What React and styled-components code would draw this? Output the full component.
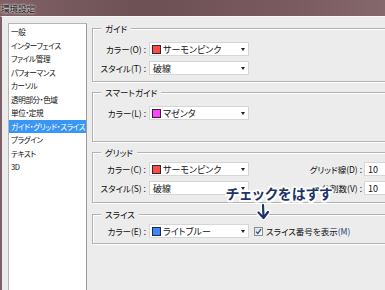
import React from "react";
import styled, { createGlobalStyle } from "styled-components";

const GlobalStyle = createGlobalStyle`
  html, body {
    margin: 0;
    padding: 0;
  }
  body {
    background: #ececec;
    font-family: "Noto Sans CJK JP", "Noto Sans", sans-serif;
    font-feature-settings: "palt";
  }
`;

const Frame = styled.div`
  width: 385px;
  height: 290px;
  overflow: hidden;
`;

const Window = styled.div`
  width: 420px;
  height: 290px;
  display: flex;
  flex-direction: column;
`;

const TitleBar = styled.div`
  height: 16px;
  flex: none;
  display: flex;
  align-items: center;
  padding-left: 1px;
  background: linear-gradient(90deg, #806266 0%, #6d5054 35%, #7a5c60 70%, #8a6d70 100%);
  font-size: 8.5px;
  color: #111;
  text-shadow: 0 0 3px rgba(255, 255, 255, 0.9), 0 0 2px rgba(255, 255, 255, 0.9);
`;

const Body = styled.div`
  position: relative;
  flex: 1;
  min-height: 0;
  overflow: hidden;
  display: flex;
  align-items: flex-start;
  background: #ececec;
  border-left: 2px solid #7d6166;
  border-top: 1px solid #f8f8f8;
  padding-left: 6px;
`;

const List = styled.ul`
  list-style: none;
  margin: 6px 0 0;
  padding: 1px 0 0;
  width: 79px;
  height: 290px;
  box-sizing: border-box;
  overflow: hidden;
  background: #fff;
  border: 1px solid #b5b5b5;
  border-right-color: #9a9a9a;
  font-size: 7.6px;
  letter-spacing: -0.4px;
`;

const ListItem = styled.li`
  height: 13.5px;
  line-height: 13.5px;
  padding-left: 2px;
  white-space: nowrap;
  color: ${(p) => (p.$selected ? "#fff" : "#111")};
  background: ${(p) => (p.$selected ? "#3a96f5" : "transparent")};
`;

const Panel = styled.div`
  flex: 1;
  display: flex;
  flex-direction: column;
  padding: 11px 0 0 5px;
`;

const Group = styled.section`
  position: relative;
  box-sizing: border-box;
  height: ${(p) => p.$h}px;
  margin-top: ${(p) => p.$mt || 0}px;
  padding-top: ${(p) => p.$pt}px;
  border: 1px solid #b3b3b3;
  box-shadow: inset 1px 1px 0 #fff, 1px 1px 0 #fff;
  display: flex;
  flex-direction: column;
  gap: 5px;
`;

const Legend = styled.span`
  position: absolute;
  top: -6px;
  left: 8px;
  padding: 0 4px;
  background: #ececec;
  font-size: 8.5px;
  line-height: 11px;
  color: #111;
`;

const Row = styled.div`
  display: flex;
  align-items: center;
  height: 14px;
  font-size: 8.5px;
  color: #111;
`;

const Label = styled.span`
  width: ${(p) => p.$w || 53}px;
  text-align: right;
  white-space: nowrap;
  flex: none;
`;

const Select = styled.div`
  margin-left: 3px;
  width: 100px;
  height: 14px;
  box-sizing: border-box;
  flex: none;
  display: flex;
  align-items: center;
  padding-left: ${(p) => (p.$plain ? 3 : 2)}px;
  background: #fff;
  border: 1px solid #d6d6d6;
  font-size: 9px;
`;

const Swatch = styled.span`
  width: 9px;
  height: 9px;
  box-sizing: border-box;
  flex: none;
  margin-right: 2px;
  border: 1px solid #2a2a2a;
  background: ${(p) => p.$color};
`;

const Arrow = styled.span`
  margin-left: auto;
  margin-right: 3px;
  width: 0;
  height: 0;
  border-left: 2.5px solid transparent;
  border-right: 2.5px solid transparent;
  border-top: 3px solid #222;
`;

const NumInput = styled.div`
  margin-left: 2px;
  width: 40px;
  height: 14px;
  box-sizing: border-box;
  padding-left: 3px;
  display: flex;
  align-items: center;
  background: #fff;
  border: 1px solid #d6d6d6;
  font-size: 9px;
`;

const Check = styled.span`
  margin-left: 5px;
  width: 9px;
  height: 9px;
  box-sizing: border-box;
  flex: none;
  display: flex;
  align-items: center;
  justify-content: center;
  border: 1px solid #8e8f8f;
  background: linear-gradient(135deg, #dcdcdc, #fafafa);
`;

const CheckLabel = styled.span`
  margin-left: 3px;
  white-space: nowrap;
`;

const Mnemonic = styled.span`
  color: #2b3f7a;
`;

const Note = styled.div`
  position: absolute;
  left: 224px;
  top: 166px;
  font-size: 14px;
  font-weight: 700;
  letter-spacing: 0.5px;
  color: #1d3466;
  white-space: nowrap;
  text-shadow: 2px 0 0 #fff, -2px 0 0 #fff, 0 2px 0 #fff, 0 -2px 0 #fff,
    1.5px 1.5px 0 #fff, -1.5px 1.5px 0 #fff, 1.5px -1.5px 0 #fff, -1.5px -1.5px 0 #fff;
`;

const NoteArrow = styled.svg`
  position: absolute;
  left: 253px;
  top: 186px;
`;

const items = [
  "一般",
  "インターフェイス",
  "ファイル管理",
  "パフォーマンス",
  "カーソル",
  "透明部分・色域",
  "単位・定規",
  "ガイド・グリッド・スライス",
  "プラグイン",
  "テキスト",
  "3D",
];

const ColorSelect = ({ color, children }) => (
  <Select>
    <Swatch $color={color} />
    {children}
    <Arrow />
  </Select>
);

const PlainSelect = ({ children }) => (
  <Select $plain>
    {children}
    <Arrow />
  </Select>
);

export default function App() {
  return (
    <Frame>
      <GlobalStyle />
      <Window>
        <TitleBar>環境設定</TitleBar>
        <Body>
          <List>
            {items.map((it, i) => (
              <ListItem key={it} $selected={i === 7}>
                {it}
              </ListItem>
            ))}
          </List>
          <Panel>
            <Group $h={54} $pt={13}>
              <Legend>ガイド</Legend>
              <Row>
                <Label>カラー(O) :</Label>
                <ColorSelect color="#ff4a4a">サーモンピンク</ColorSelect>
              </Row>
              <Row>
                <Label>スタイル(T) :</Label>
                <PlainSelect>破線</PlainSelect>
              </Row>
            </Group>
            <Group $h={50} $mt={10} $pt={13}>
              <Legend>スマートガイド</Legend>
              <Row>
                <Label>カラー(L) :</Label>
                <ColorSelect color="#ff44ff">マゼンタ</ColorSelect>
              </Row>
            </Group>
            <Group $h={51} $mt={10} $pt={9}>
              <Legend>グリッド</Legend>
              <Row>
                <Label>カラー(C) :</Label>
                <ColorSelect color="#ff4a4a">サーモンピンク</ColorSelect>
                <Label $w={113}>グリッド線(D) :</Label>
                <NumInput>10</NumInput>
              </Row>
              <Row>
                <Label>スタイル(S) :</Label>
                <PlainSelect>破線</PlainSelect>
                <Label $w={113}>分割数(V) :</Label>
                <NumInput>10</NumInput>
              </Row>
            </Group>
            <Group $h={30} $mt={11} $pt={9}>
              <Legend>スライス</Legend>
              <Row>
                <Label>カラー(E) :</Label>
                <ColorSelect color="#3d86ff">ライトブルー</ColorSelect>
                <Check>
                  <svg width="7" height="7" viewBox="0 0 7 7">
                    <path d="M1 3.6 L2.8 5.4 L6 1.2" fill="none" stroke="#2b4f9a" strokeWidth="1.3" />
                  </svg>
                </Check>
                <CheckLabel>
                  スライス番号を表示<Mnemonic>(M)</Mnemonic>
                </CheckLabel>
              </Row>
            </Group>
          </Panel>
          <Note>チェックをはずす</Note>
          <NoteArrow width="16" height="18" viewBox="0 0 16 18">
            <path d="M8 2 L8.5 14 M3.5 9.5 L8.5 15 L13 9" fill="none" stroke="#fff" strokeWidth="5" strokeLinecap="round" strokeLinejoin="round" />
            <path d="M8 2 L8.5 14 M3.5 9.5 L8.5 15 L13 9" fill="none" stroke="#1d3466" strokeWidth="2.2" strokeLinecap="round" strokeLinejoin="round" />
          </NoteArrow>
        </Body>
      </Window>
    </Frame>
  );
}
